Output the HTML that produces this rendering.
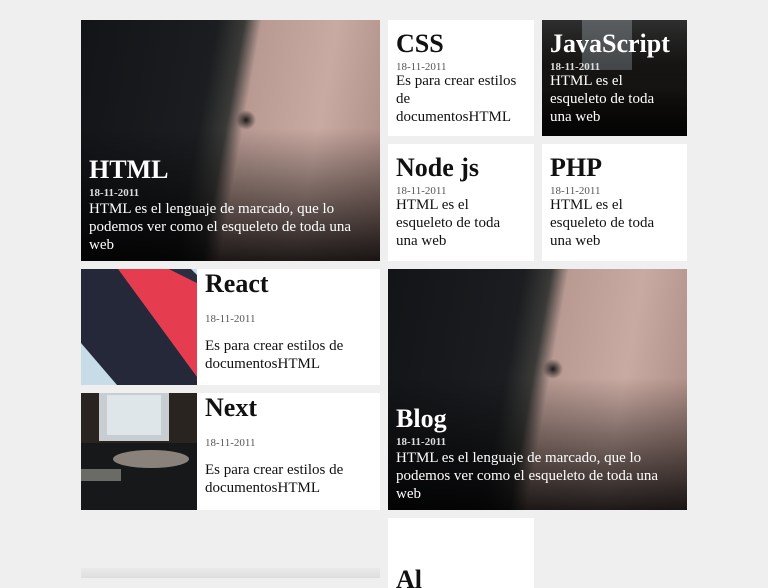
<!DOCTYPE html>
<html><head><meta charset="utf-8"><style>
*{margin:0;padding:0;box-sizing:border-box}
body{width:768px;height:576px;overflow:hidden;background:#efefef;font-family:"Liberation Serif",serif;position:relative}
.c{position:absolute;background:#fff;overflow:hidden}
h2{font-size:26px;font-weight:bold;line-height:28px;color:#111}
.d{font-size:11px;color:#555;line-height:13px}
p{font-size:15px;line-height:18px;color:#111}
.w h2,.w p{color:#fff}.w .d{color:#ddd}
.t{position:absolute;left:8px}
.img1{background:
radial-gradient(ellipse 10px 10px at 165px 100px,#1a1a1a,transparent),
linear-gradient(to bottom,rgba(0,0,0,0) 45%,rgba(0,0,0,.85) 100%),
linear-gradient(100deg,#121417 0,#1b1d20 40%,#3a3a38 48%,#b89a92 53%,#c9aaa2 75%,#a98a82 100%)}
.img2{background:linear-gradient(to bottom,rgba(0,0,0,.2),rgba(0,0,0,.6)),
linear-gradient(180deg,#3a3a3a 0,#2a2826 40%,#3a342e 60%,#161412 100%)}
</style></head><body>

<div class="c w img1" style="left:81px;top:20px;width:299px;height:241px">
 <div class="t" style="top:136px"><h2>HTML</h2></div>
 <div class="t d" style="top:167px;font-weight:bold">18-11-2011</div>
 <div class="t" style="top:180px;width:285px"><p>HTML es el lenguaje de marcado, que lo podemos ver como el esqueleto de toda una web</p></div>
</div>

<div class="c" style="left:388px;top:20px;width:146px;height:116px">
 <div class="t" style="top:10px"><h2>CSS</h2></div>
 <div class="t d" style="top:41px">18-11-2011</div>
 <div class="t" style="top:52px;width:124px"><p>Es para crear estilos de documentosHTML</p></div>
</div>

<div class="c w img2" style="left:542px;top:20px;width:145px;height:116px">
 <div style="position:absolute;left:40px;top:0;width:50px;height:50px;background:#5a5e60"></div>
 <div style="position:absolute;left:0;top:0;width:145px;height:116px;background:linear-gradient(to bottom,rgba(0,0,0,0),rgba(0,0,0,.6))"></div>
 <div class="t" style="top:10px"><h2>JavaScript</h2></div>
 <div class="t d" style="top:41px;font-weight:bold">18-11-2011</div>
 <div class="t" style="top:52px;width:124px"><p>HTML es el esqueleto de toda una web</p></div>
</div>

<div class="c" style="left:388px;top:144px;width:146px;height:117px">
 <div class="t" style="top:10px"><h2>Node js</h2></div>
 <div class="t d" style="top:41px">18-11-2011</div>
 <div class="t" style="top:52px;width:124px"><p>HTML es el esqueleto de toda una web</p></div>
</div>

<div class="c" style="left:542px;top:144px;width:145px;height:117px">
 <div class="t" style="top:10px"><h2>PHP</h2></div>
 <div class="t d" style="top:41px">18-11-2011</div>
 <div class="t" style="top:52px;width:124px"><p>HTML es el esqueleto de toda una web</p></div>
</div>

<div class="c" style="left:81px;top:269px;width:299px;height:116px">
 <svg style="position:absolute;left:0;top:0" width="116" height="116" viewBox="0 0 116 116">
  <rect width="116" height="116" fill="#242838"/>
  <polygon points="37,0 88,0 116,14 116,108" fill="#e53d4f"/>
  <polygon points="88,0 110,0 116,6 116,14" fill="#2a2e40"/>
  <polygon points="110,0 116,0 116,6" fill="#c8dce8"/>
  <polygon points="0,74 36,116 0,116" fill="#c8dce8"/>
 </svg>
 <div style="position:absolute;left:124px;top:1px"><h2>React</h2></div>
 <div class="d" style="position:absolute;left:124px;top:44px">18-11-2011</div>
 <div style="position:absolute;left:124px;top:68px;width:170px"><p>Es para crear estilos de documentosHTML</p></div>
</div>

<div class="c" style="left:81px;top:393px;width:299px;height:117px">
 <svg style="position:absolute;left:0;top:0" width="116" height="117" viewBox="0 0 116 117">
  <rect width="116" height="117" fill="#2a2420"/>
  <rect x="18" y="0" width="70" height="48" fill="#c7cdd0"/>
  <rect x="26" y="2" width="54" height="40" fill="#dfe6ea"/>
  <rect x="0" y="50" width="116" height="67" fill="#161819"/>
  <ellipse cx="70" cy="66" rx="38" ry="9" fill="#8a827a"/>
  <rect x="0" y="76" width="40" height="12" fill="#6a6a66"/>
 </svg>
 <div style="position:absolute;left:124px;top:1px"><h2>Next</h2></div>
 <div class="d" style="position:absolute;left:124px;top:44px">18-11-2011</div>
 <div style="position:absolute;left:124px;top:68px;width:170px"><p>Es para crear estilos de documentosHTML</p></div>
</div>

<div class="c w img1" style="left:388px;top:269px;width:299px;height:241px">
 <div class="t" style="top:136px"><h2>Blog</h2></div>
 <div class="t d" style="top:167px;font-weight:bold">18-11-2011</div>
 <div class="t" style="top:180px;width:285px"><p>HTML es el lenguaje de marcado, que lo podemos ver como el esqueleto de toda una web</p></div>
</div>

<div class="c" style="left:388px;top:518px;width:146px;height:70px">
 <div class="t" style="top:48px"><h2>Al</h2></div>
</div>

<div style="position:absolute;left:81px;top:568px;width:299px;height:10px;background:linear-gradient(#eaeaea,#dedede)"></div>
</body></html>
